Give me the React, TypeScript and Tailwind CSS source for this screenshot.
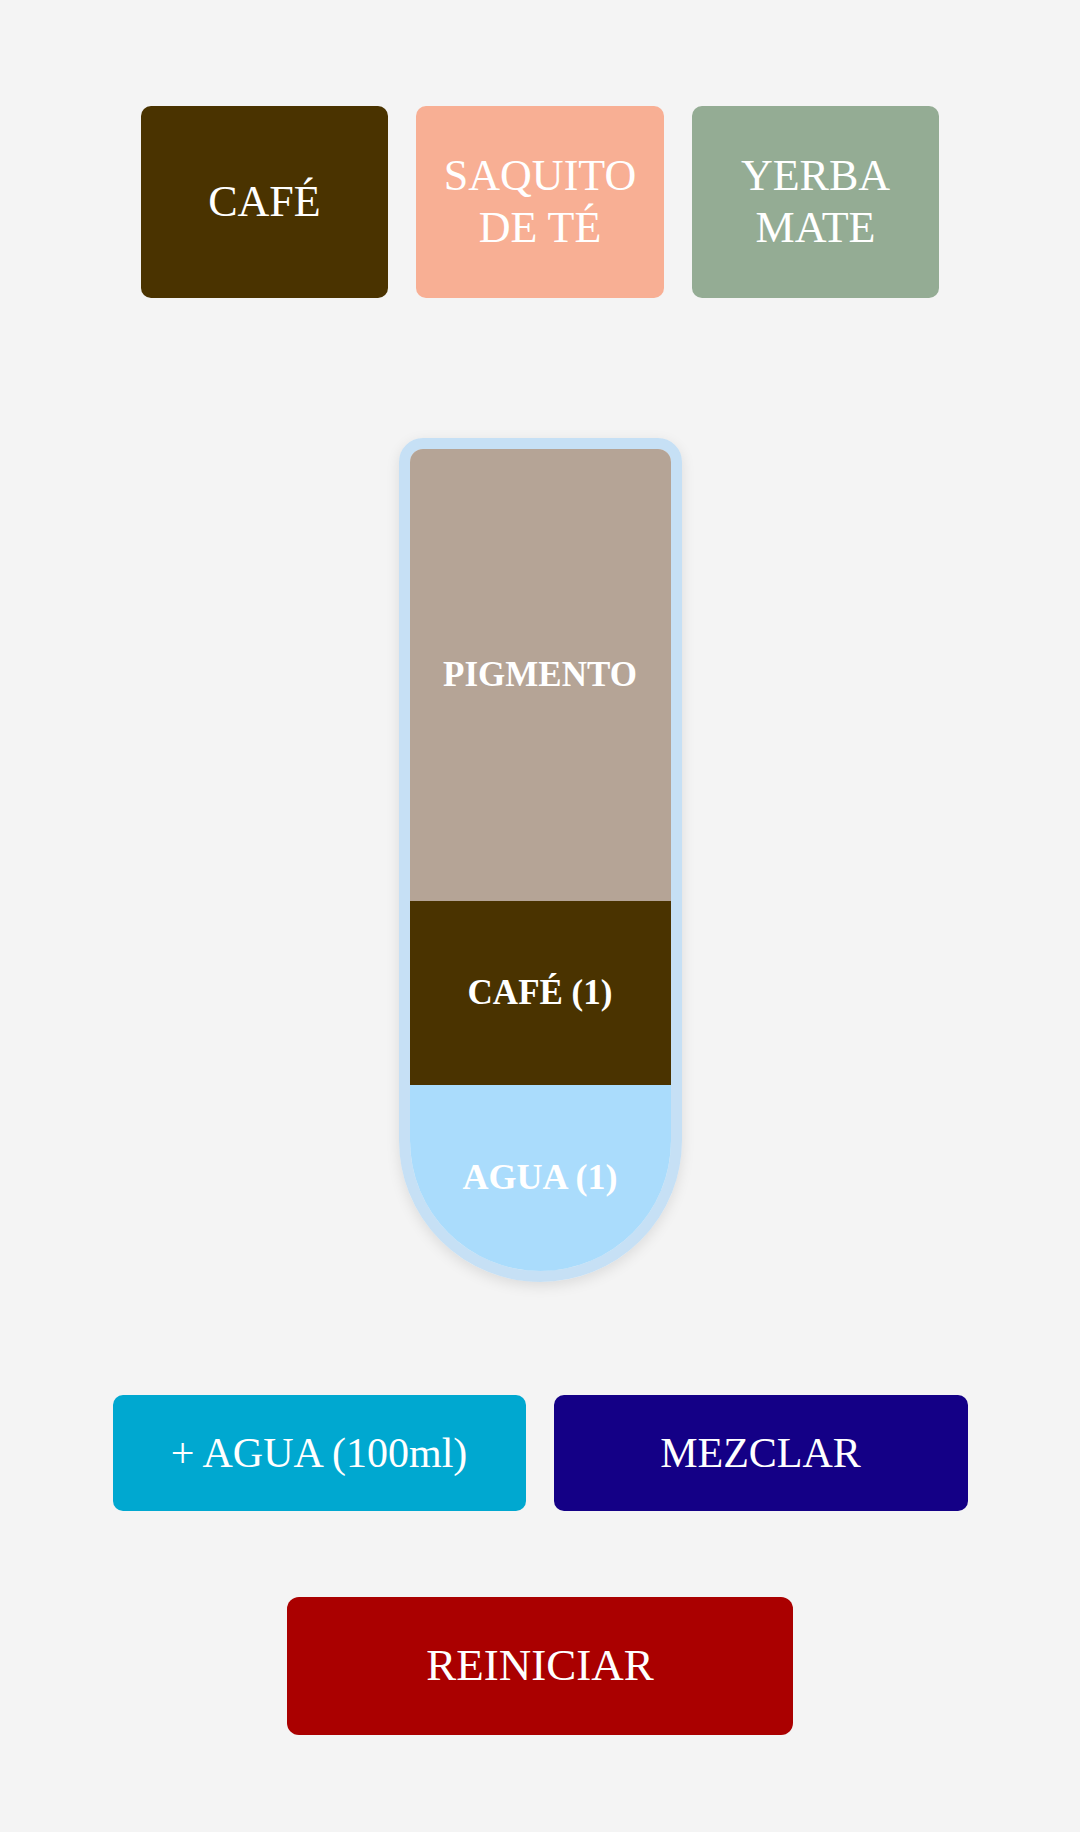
import React from "react";

const serif = { fontFamily: '"Liberation Serif", "DejaVu Serif", serif' };

export default function App() {
  return (
    <div className="min-h-[1832px] w-[1080px] bg-[#f4f4f4] flex flex-col items-center" style={serif}>
      <div className="mt-[106px] flex gap-[28px]">
        <button className="w-[247px] h-[192px] rounded-[10px] bg-[#4a3300] text-white text-[44px] leading-[52px] flex items-center justify-center text-center">
          CAFÉ
        </button>
        <button className="w-[248px] h-[192px] rounded-[10px] bg-[#f8af94] text-white text-[44px] leading-[52px] flex items-center justify-center text-center">
          SAQUITO<br />DE TÉ
        </button>
        <button className="w-[247px] h-[192px] rounded-[10px] bg-[#94ac94] text-white text-[44px] leading-[52px] flex items-center justify-center text-center">
          YERBA<br />MATE
        </button>
      </div>

      <div className="mt-[140px] w-[283px] h-[844px] border-[11px] border-[#c6e0f5] rounded-t-[24px] rounded-b-[142px] overflow-hidden flex flex-col shadow-[0_4px_14px_rgba(0,0,0,0.10)]">
        <div className="flex-1 bg-[#b5a496] flex items-center justify-center text-white font-bold text-[35px]">
          PIGMENTO
        </div>
        <div className="h-[184px] bg-[#4a3300] flex items-center justify-center text-white font-bold text-[35px]">
          CAFÉ (1)
        </div>
        <div className="h-[186px] bg-[#aadcfc] flex items-start justify-center pt-[65px] text-white font-bold text-[36px]">
          AGUA (1)
        </div>
      </div>

      <div className="mt-[113px] flex gap-[28px]">
        <button className="w-[413px] h-[116px] rounded-[10px] bg-[#00a8d0] text-white text-[42px] flex items-center justify-center">
          + AGUA (100ml)
        </button>
        <button className="w-[414px] h-[116px] rounded-[10px] bg-[#140086] text-white text-[42px] flex items-center justify-center">
          MEZCLAR
        </button>
      </div>

      <button className="mt-[86px] w-[506px] h-[138px] rounded-[12px] bg-[#aa0000] text-white text-[45px] flex items-center justify-center">
        REINICIAR
      </button>
    </div>
  );
}
